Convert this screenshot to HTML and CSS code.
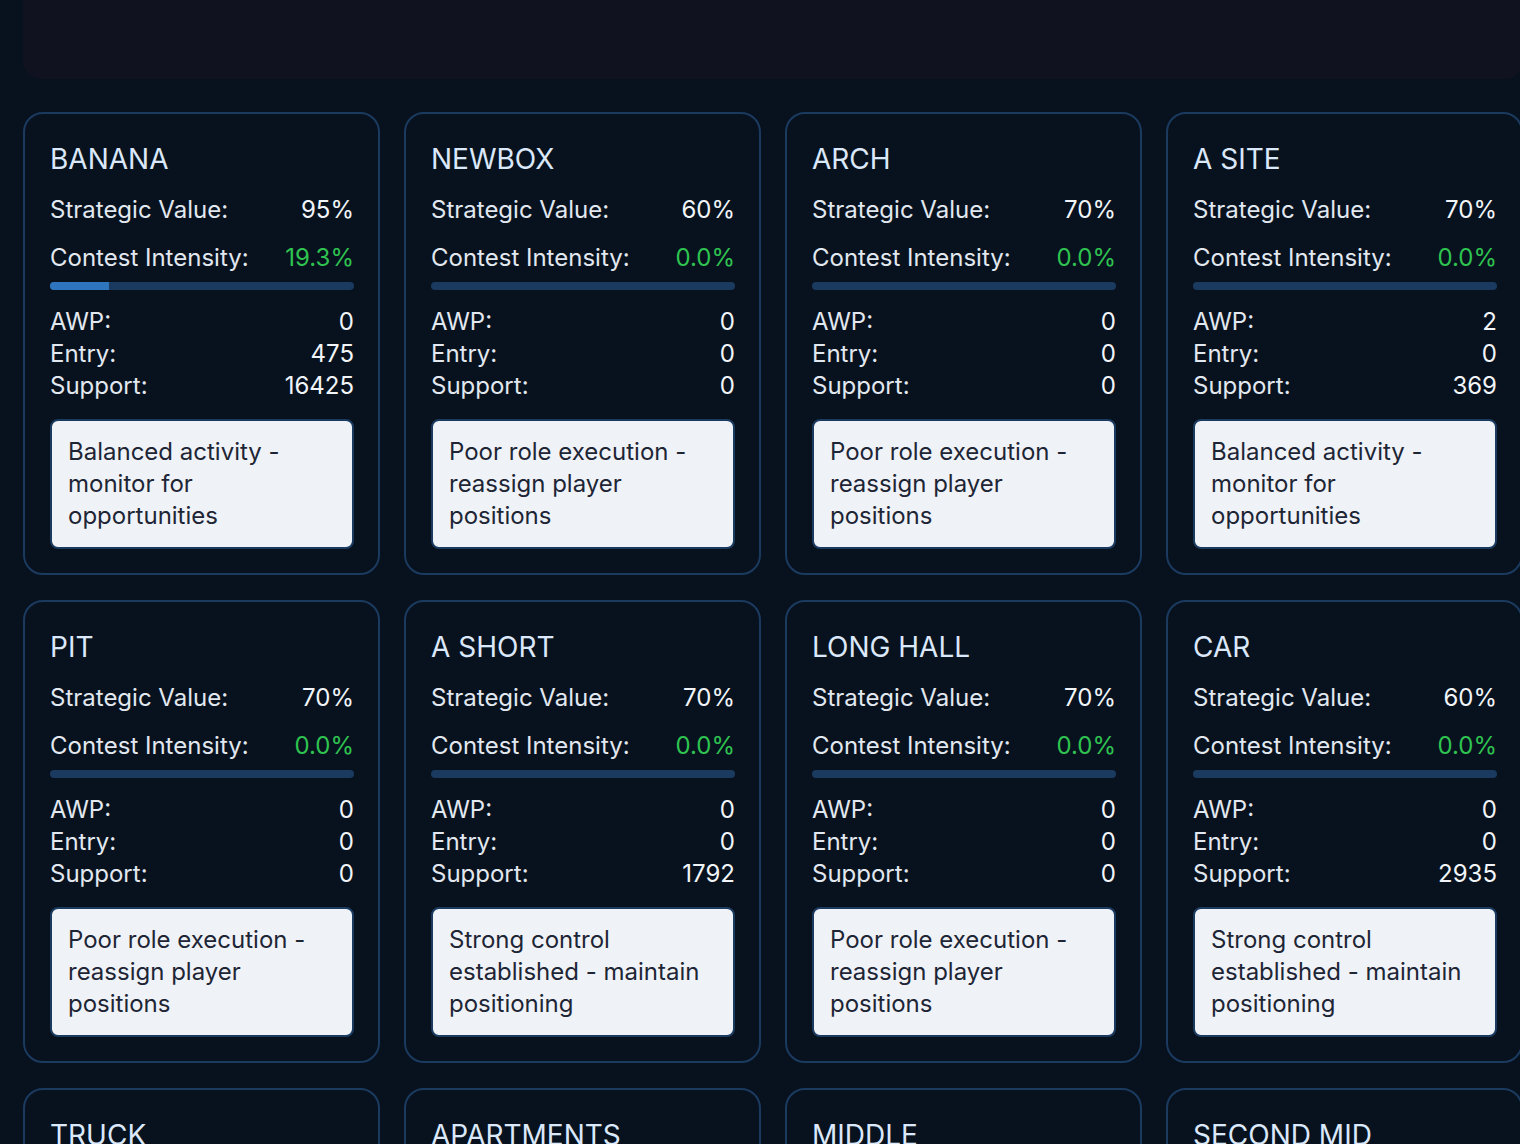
FILE: index.html
```html
<!DOCTYPE html>
<html>
<head>
<meta charset="utf-8">
<link rel="stylesheet" href="styles.css">
</head>
<body>
<div class="page">
  <div class="header"></div>
  <div class="grid" id="grid"></div>
</div>
<script>
const data = [
  ["BANANA","95%","19.3%",19.3,"0","475","16425","Balanced activity - monitor for opportunities"],
  ["NEWBOX","60%","0.0%",0,"0","0","0","Poor role execution - reassign player positions"],
  ["ARCH","70%","0.0%",0,"0","0","0","Poor role execution - reassign player positions"],
  ["A SITE","70%","0.0%",0,"2","0","369","Balanced activity - monitor for opportunities"],
  ["PIT","70%","0.0%",0,"0","0","0","Poor role execution - reassign player positions"],
  ["A SHORT","70%","0.0%",0,"0","0","1792","Strong control established - maintain positioning"],
  ["LONG HALL","70%","0.0%",0,"0","0","0","Poor role execution - reassign player positions"],
  ["CAR","60%","0.0%",0,"0","0","2935","Strong control established - maintain positioning"],
  ["TRUCK","70%","0.0%",0,"0","0","0","Poor role execution - reassign player positions"],
  ["APARTMENTS","70%","0.0%",0,"0","0","0","Poor role execution - reassign player positions"],
  ["MIDDLE","70%","0.0%",0,"0","0","0","Poor role execution - reassign player positions"],
  ["SECOND MID","70%","0.0%",0,"0","0","0","Poor role execution - reassign player positions"]
];
const grid = document.getElementById('grid');
grid.innerHTML = data.map(d => `
  <div class="card">
    <div class="title">${d[0]}</div>
    <div class="row"><span>Strategic Value:</span><span class="val">${d[1]}</span></div>
    <div class="row contest"><span>Contest Intensity:</span><span class="green">${d[2]}</span></div>
    <div class="bar"><div class="fill" style="width:${d[3]}%"></div></div>
    <div class="stats">
      <div class="stat"><span>AWP:</span><span class="val">${d[4]}</span></div>
      <div class="stat"><span>Entry:</span><span class="val">${d[5]}</span></div>
      <div class="stat"><span>Support:</span><span class="val">${d[6]}</span></div>
    </div>
    <div class="note">${d[7]}</div>
  </div>`).join('');
</script>
</body>
</html>
```
FILE: styles.css
```css
html, body {
  margin: 0;
  padding: 0;
  overflow: hidden;
  background: #08121e;
}
body {
  font-family: Inter, "Noto Sans", sans-serif;
  color: #e2e8f0;
}
.page {
  width: 1500px;
  padding-left: 23px;
}
.header {
  height: 79px;
  background: #10121f;
  border-radius: 0 0 18px 18px;
  margin-bottom: 33px;
}
.grid {
  display: grid;
  grid-template-columns: repeat(4, 1fr);
  column-gap: 24px;
  row-gap: 25px;
}
.card {
  border: 2px solid #1b3a5f;
  border-radius: 20px;
  padding: 24px 24px 24px 25px;
  background: #08121e;
}
.title {
  font-size: 28px;
  line-height: 42px;
  color: #dbe8fa;
  margin-bottom: 12px;
}
.row {
  display: flex;
  justify-content: space-between;
  font-size: 24px;
  line-height: 36px;
  margin-bottom: 12px;
  color: #e2e8f0;
}
.row.contest {
  margin-bottom: 6px;
}
.val {
  color: #f1f5f9;
}
.green {
  color: #2fc350;
}
.bar {
  height: 8px;
  border-radius: 4px;
  background: #1b3a5f;
  overflow: hidden;
  margin-bottom: 16px;
}
.fill {
  height: 100%;
  background: #2e75bd;
}
.stats {
  margin-bottom: 17px;
}
.stat {
  display: flex;
  justify-content: space-between;
  font-size: 24px;
  line-height: 32px;
}
.note {
  background: #eff3f8;
  border: 2px solid #1b3a5f;
  border-radius: 8px;
  padding: 15px 16px;
  color: #1e2535;
  font-size: 24px;
  line-height: 32px;
  min-height: 96px;
}
```
